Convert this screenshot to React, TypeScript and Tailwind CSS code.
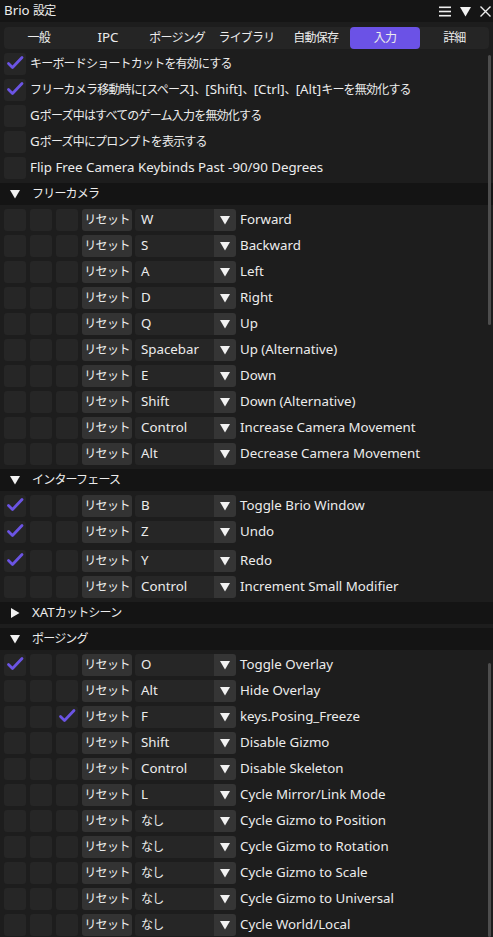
import * as React from "react";

type KeyRow = { checks: [boolean, boolean, boolean]; key: string; label: string; extra?: boolean };

const TABS = ["一般", "IPC", "ポージング", "ライブラリ", "自動保存", "入力", "詳細"];

const OPTIONS: { checked: boolean; label: string }[] = [
  { checked: true, label: "キーボードショートカットを有効にする" },
  { checked: true, label: "フリーカメラ移動時に[スペース]、[Shift]、[Ctrl]、[Alt]キーを無効化する" },
  { checked: false, label: "Gポーズ中はすべてのゲーム入力を無効化する" },
  { checked: false, label: "Gポーズ中にプロンプトを表示する" },
  { checked: false, label: "Flip Free Camera Keybinds Past -90/90 Degrees" },
];

const none: [boolean, boolean, boolean] = [false, false, false];

const FREE_CAMERA: KeyRow[] = [
  { checks: none, key: "W", label: "Forward" },
  { checks: none, key: "S", label: "Backward" },
  { checks: none, key: "A", label: "Left" },
  { checks: none, key: "D", label: "Right" },
  { checks: none, key: "Q", label: "Up" },
  { checks: none, key: "Spacebar", label: "Up (Alternative)" },
  { checks: none, key: "E", label: "Down" },
  { checks: none, key: "Shift", label: "Down (Alternative)" },
  { checks: none, key: "Control", label: "Increase Camera Movement" },
  { checks: none, key: "Alt", label: "Decrease Camera Movement" },
];

const INTERFACE: KeyRow[] = [
  { checks: [true, false, false], key: "B", label: "Toggle Brio Window" },
  { checks: [true, false, false], key: "Z", label: "Undo" },
  { checks: [true, false, false], key: "Y", label: "Redo", extra: true },
  { checks: none, key: "Control", label: "Increment Small Modifier" },
];

const POSING: KeyRow[] = [
  { checks: [true, false, false], key: "O", label: "Toggle Overlay" },
  { checks: none, key: "Alt", label: "Hide Overlay" },
  { checks: [false, false, true], key: "F", label: "keys.Posing_Freeze" },
  { checks: none, key: "Shift", label: "Disable Gizmo" },
  { checks: none, key: "Control", label: "Disable Skeleton" },
  { checks: none, key: "L", label: "Cycle Mirror/Link Mode" },
  { checks: none, key: "なし", label: "Cycle Gizmo to Position" },
  { checks: none, key: "なし", label: "Cycle Gizmo to Rotation" },
  { checks: none, key: "なし", label: "Cycle Gizmo to Scale" },
  { checks: none, key: "なし", label: "Cycle Gizmo to Universal" },
  { checks: none, key: "なし", label: "Cycle World/Local" },
];

// japanese glyphs in the game font run tighter than the latin ones
const CJK = /([\u3000-\u9fff\uff00-\uffef]+)/;

function T({ children }: { children: string }) {
  return (
    <>
      {children.split(CJK).map((part, i) =>
        i % 2 === 1 ? (
          <span key={i} className="text-[12px] tracking-[-0.8px]">
            {part}
          </span>
        ) : (
          part
        )
      )}
    </>
  );
}

function CheckBox({ checked }: { checked: boolean }) {
  return (
    <div className="flex h-[22px] w-[22px] shrink-0 items-center justify-center rounded-[3px] bg-[#262626]">
      {checked && (
        <svg width="22" height="22" viewBox="0 0 22 22" fill="none">
          <path d="M4.5 10.5 L8.5 14.5 L18 4.5" stroke="#6b54e3" strokeWidth="2.8" strokeLinecap="round" strokeLinejoin="round" />
        </svg>
      )}
    </div>
  );
}

function DownTri({ size = 10 }: { size?: number }) {
  return (
    <svg width={size} height={size} viewBox="0 0 10 10">
      <path d="M0 1 L10 1 L5 9.5 Z" fill="#f2f2f2" />
    </svg>
  );
}

function RightTri() {
  return (
    <svg width="10" height="10" viewBox="0 0 10 10">
      <path d="M1 0 L9.5 5 L1 10 Z" fill="#f2f2f2" />
    </svg>
  );
}

function SectionHeader({ label, open = true }: { label: string; open?: boolean }) {
  return (
    <div className="flex h-[22px] items-center bg-[#141414] pl-[10px] pr-[8px]">
      {open ? <DownTri /> : <RightTri />}
      <span className="ml-[12px]">
        <T>{label}</T>
      </span>
    </div>
  );
}

function KeyBindRow({ row }: { row: KeyRow }) {
  return (
    <div className={`flex h-[22px] items-center px-[4px] ${row.extra ? "mt-[3px]" : ""}`}>
      <div className="flex gap-[4px]">
        {row.checks.map((c, i) => (
          <CheckBox key={i} checked={c} />
        ))}
      </div>
      <div className="ml-[4px] flex h-[22px] w-[50px] items-center justify-center rounded-[3px] bg-[#333333] text-[12px] tracking-[-0.6px]">
        リセット
      </div>
      <div className="ml-[3px] flex h-[22px] w-[79px] items-center rounded-l-[3px] bg-[#262626] pl-[6px]">
        <T>{row.key}</T>
      </div>
      <div className="flex h-[22px] w-[22px] items-center justify-center rounded-r-[3px] bg-[#353535]">
        <DownTri />
      </div>
      <span className="ml-[4px] whitespace-nowrap">{row.label}</span>
    </div>
  );
}

export default function App() {
  return (
    <div className="relative h-[937px] w-[493px] overflow-hidden bg-[#1d1d1d] text-[13.3px] leading-none text-[#ececec] [font-family:'Noto_Sans','Noto_Sans_CJK_JP',sans-serif]">
      {/* Title bar */}
      <div className="flex h-[22px] items-center justify-between bg-[#151515] pl-[4px] pr-[2px]">
        <span>
          <T>Brio 設定</T>
        </span>
        <div className="flex items-center gap-[9px]">
          <svg width="12" height="11" viewBox="0 0 12 11">
            <rect x="0" y="0.5" width="12" height="1.6" fill="#eee" />
            <rect x="0" y="4.7" width="12" height="1.6" fill="#eee" />
            <rect x="0" y="8.9" width="12" height="1.6" fill="#eee" />
          </svg>
          <DownTri size={11} />
          <svg width="11" height="11" viewBox="0 0 11 11">
            <path d="M0.5 0.5 L10.5 10.5 M10.5 0.5 L0.5 10.5" stroke="#eee" strokeWidth="1.4" />
          </svg>
        </div>
      </div>

      {/* Tabs */}
      <div className="mx-[4px] mt-[5px] flex h-[22px] rounded-[4px] bg-[#252525]">
        {TABS.map((t) => (
          <div
            key={t}
            className={`flex flex-1 items-center justify-center rounded-[4px] ${t === "入力" ? "bg-[#6b52e6]" : ""}`}
          >
            <T>{t}</T>
          </div>
        ))}
      </div>

      {/* Content */}
      <div className="flex flex-col gap-[4px] pt-[4px]">
        {OPTIONS.map((o) => (
          <div key={o.label} className="flex h-[22px] items-center px-[4px]">
            <CheckBox checked={o.checked} />
            <span className="ml-[4px] whitespace-nowrap">
              <T>{o.label}</T>
            </span>
          </div>
        ))}

        <SectionHeader label="フリーカメラ" />
        {FREE_CAMERA.map((r) => (
          <KeyBindRow key={r.label} row={r} />
        ))}

        <SectionHeader label="インターフェース" />
        {INTERFACE.map((r) => (
          <KeyBindRow key={r.label} row={r} />
        ))}

        <SectionHeader label="XATカットシーン" open={false} />

        <SectionHeader label="ポージング" />
        {POSING.map((r) => (
          <KeyBindRow key={r.label} row={r} />
        ))}
      </div>

      {/* Scrollbar thumbs */}
      <div className="absolute right-[2px] top-[55px] h-[270px] w-[3px] rounded-full bg-[#4d4d4d]" />
      <div className="absolute right-[2px] top-[663px] h-[274px] w-[3px] rounded-full bg-[#4d4d4d]" />
    </div>
  );
}
